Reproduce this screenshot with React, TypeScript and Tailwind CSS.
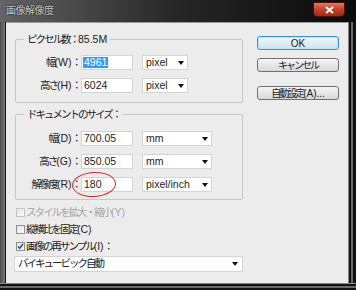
import React from "react";

// narrow the full-width (CJK) runs a little, like the dialog font
function J({ t }: { t: string }) {
  const parts = t.split(/([\u3000-\u30ff\u4e00-\u9fff\uff01-\uff60]+)/);
  return (
    <>
      {parts.map((p, i) =>
        i % 2 === 1 ? (
          <span key={i} className="tracking-[-2px]">
            {p}
          </span>
        ) : (
          p
        )
      )}
    </>
  );
}

function Arrow() {
  return (
    <svg width="6" height="4" viewBox="0 0 6 4" className="shrink-0">
      <path d="M0 0h6L3 4z" fill="#111" />
    </svg>
  );
}

function Select({ text, w }: { text: string; w: string }) {
  return (
    <div
      className={`${w} ml-[9px] h-[15px] bg-white border border-[#d4d4d4] flex items-center justify-between pl-[3px] pr-[3px] text-[10.5px] text-[#222]`}
    >
      <span>{text}</span>
      <Arrow />
    </div>
  );
}

function Row({
  label,
  value,
  unit,
  unitW,
  selected,
  circle,
}: {
  label: string;
  value: string;
  unit: string;
  unitW: string;
  selected?: boolean;
  circle?: boolean;
}) {
  return (
    <div className="relative flex items-center h-[15px]">
      <div className="w-[64px] text-right text-[10.5px] leading-[15px] text-[#222] whitespace-nowrap">
        <J t={label} />
      </div>
      <div className="ml-[1px] w-[52px] h-[15px] bg-white border border-[#d4d4d4] flex items-center pl-[1px] text-[10.5px] text-[#222]">
        {selected ? (
          <span className="bg-[#3399ff] text-white px-[1px] leading-[11px]">{value}</span>
        ) : (
          <span className="pl-[1px]">{value}</span>
        )}
      </div>
      <Select text={unit} w={unitW} />
      {circle && (
        <div className="absolute left-[56px] top-[-5px] w-[44px] h-[25px] rounded-[50%] border-[1.5px] border-[#d8262b] rotate-[-3deg]" />
      )}
    </div>
  );
}

function Check({ label, checked, disabled }: { label: string; checked?: boolean; disabled?: boolean }) {
  return (
    <div className="flex items-center h-[17px]">
      <div
        className={`ml-[1px] w-[9px] h-[9px] border flex items-center justify-center bg-linear-to-br from-[#e4e4e4] to-[#fafafa] ${
          disabled ? "border-[#c4c4c4]" : "border-[#8e8f8f]"
        }`}
      >
        {checked && (
          <svg width="7" height="7" viewBox="0 0 7 7">
            <path d="M1 3.5l1.7 1.8L6 1" stroke="#2a4fa8" strokeWidth="1.6" fill="none" />
          </svg>
        )}
      </div>
      <span className={`ml-[1px] text-[10.5px] whitespace-nowrap ${disabled ? "text-[#a6a6a6]" : "text-[#222]"}`}>
        <J t={label} />
      </span>
    </div>
  );
}

function Button({ label, primary, mt }: { label: string; primary?: boolean; mt: string }) {
  return (
    <div
      className={`${mt} w-[82px] h-[14px] rounded-[3px] border flex items-center justify-center text-[10px] text-[#222] ${
        primary
          ? "border-[#3c93d4] bg-linear-to-b from-[#eef6fb] to-[#cfe2ee] shadow-[inset_0_0_0_1px_#bfe4f8]"
          : "border-[#707070] bg-linear-to-b from-[#f5f5f5] to-[#d8d8d8]"
      }`}
    >
      <J t={label} />
    </div>
  );
}

export default function App() {
  return (
    <div className="w-[356px] h-[290px] flex flex-col bg-[#111] font-['Liberation_Sans','Noto_Sans_CJK_JP',sans-serif] overflow-hidden">
      {/* title bar */}
      <div className="h-[22px] flex justify-between bg-linear-to-r from-[#646464] via-[#262626] to-[#0b0b0b]">
        <div className="pl-[6px] pt-[5px] text-[10px] leading-[12px] text-[#c8c8c8] tracking-[-0.5px] [text-shadow:0_0_2px_#000]">
          画像解像度
        </div>
        <div className="mr-[11px] mt-[2px] w-[32px] h-[15px] rounded-b-[4px] border border-[#4a1208] bg-linear-to-b from-[#dc7a63] via-[#c2412a] to-[#a02a15] flex items-center justify-center">
          <svg width="9" height="8" viewBox="0 0 9 8">
            <path d="M1 1l7 6M8 1L1 7" stroke="#fff" strokeWidth="2" />
          </svg>
        </div>
      </div>

      <div className="flex-1 flex">
        {/* left frame */}
        <div className="w-[6px] bg-linear-to-r from-[#4a4a4a] to-[#7a7a7a] border-r border-r-[#111]" />

        {/* dialog body */}
        <div className="flex-1 flex bg-[#ececec] border-t border-t-[#9a9a9a]">
          <div className="ml-[9px] w-[228px] pt-[10px] flex flex-col">
            <fieldset className="border border-[#c6c6c6] rounded-[2px] pb-[9px]">
              <legend className="ml-[8px] px-[3px] text-[10.5px] leading-[12px] text-[#222]">
                <J t="ピクセル数：85.5M" />
              </legend>
              <div className="mt-[10px] flex flex-col gap-[8px]">
                <Row label="幅(W)：" value="4961" unit="pixel" unitW="w-[46px]" selected />
                <Row label="高さ(H)：" value="6024" unit="pixel" unitW="w-[46px]" />
              </div>
            </fieldset>

            <fieldset className="mt-[5px] border border-[#c6c6c6] rounded-[2px] pb-[7px]">
              <legend className="ml-[8px] px-[3px] text-[10.5px] leading-[12px] text-[#222]">
                <J t="ドキュメントのサイズ：" />
              </legend>
              <div className="mt-[11px] flex flex-col gap-[8px]">
                <Row label="幅(D)：" value="700.05" unit="mm" unitW="w-[70px]" />
                <Row label="高さ(G)：" value="850.05" unit="mm" unitW="w-[70px]" />
                <Row label="解像度(R)：" value="180" unit="pixel/inch" unitW="w-[70px]" circle />
              </div>
            </fieldset>

            <div className="mt-[4px] flex flex-col">
              <Check label="スタイルを拡大・縮小(Y)" disabled />
              <Check label="縦横比を固定(C)" />
              <Check label="画像の再サンプル(I)：" checked />
            </div>

            <div className="-ml-px mt-[1px] w-[229px] h-[16px] bg-white border border-[#d4d4d4] flex items-center justify-between pl-[3px] pr-[4px] text-[10.5px] text-[#222]">
              <span>
                <J t="バイキュービック自動" />
              </span>
              <Arrow />
            </div>
          </div>

          <div className="ml-[14px] pt-[13px] flex flex-col">
            <Button label="OK" primary mt="mt-0" />
            <Button label="キャンセル" mt="mt-[8px]" />
            <Button label="自動設定(A)..." mt="mt-[14px]" />
          </div>
        </div>

        {/* right frame */}
        <div className="w-[8px] flex">
          <div className="w-[1px] bg-[#8a8a8a]" />
          <div className="w-[2px] bg-[#111]" />
          <div className="w-[2px] bg-[#6a6a6a]" />
          <div className="flex-1 bg-[#111]" />
        </div>
      </div>

      {/* bottom frame */}
      <div className="h-[7px] flex flex-col">
        <div className="h-[1px] bg-[#8a8a8a]" />
        <div className="h-[2px] bg-[#111]" />
        <div className="h-[2px] bg-[#6a6a6a]" />
        <div className="flex-1 bg-[#111]" />
      </div>
    </div>
  );
}
